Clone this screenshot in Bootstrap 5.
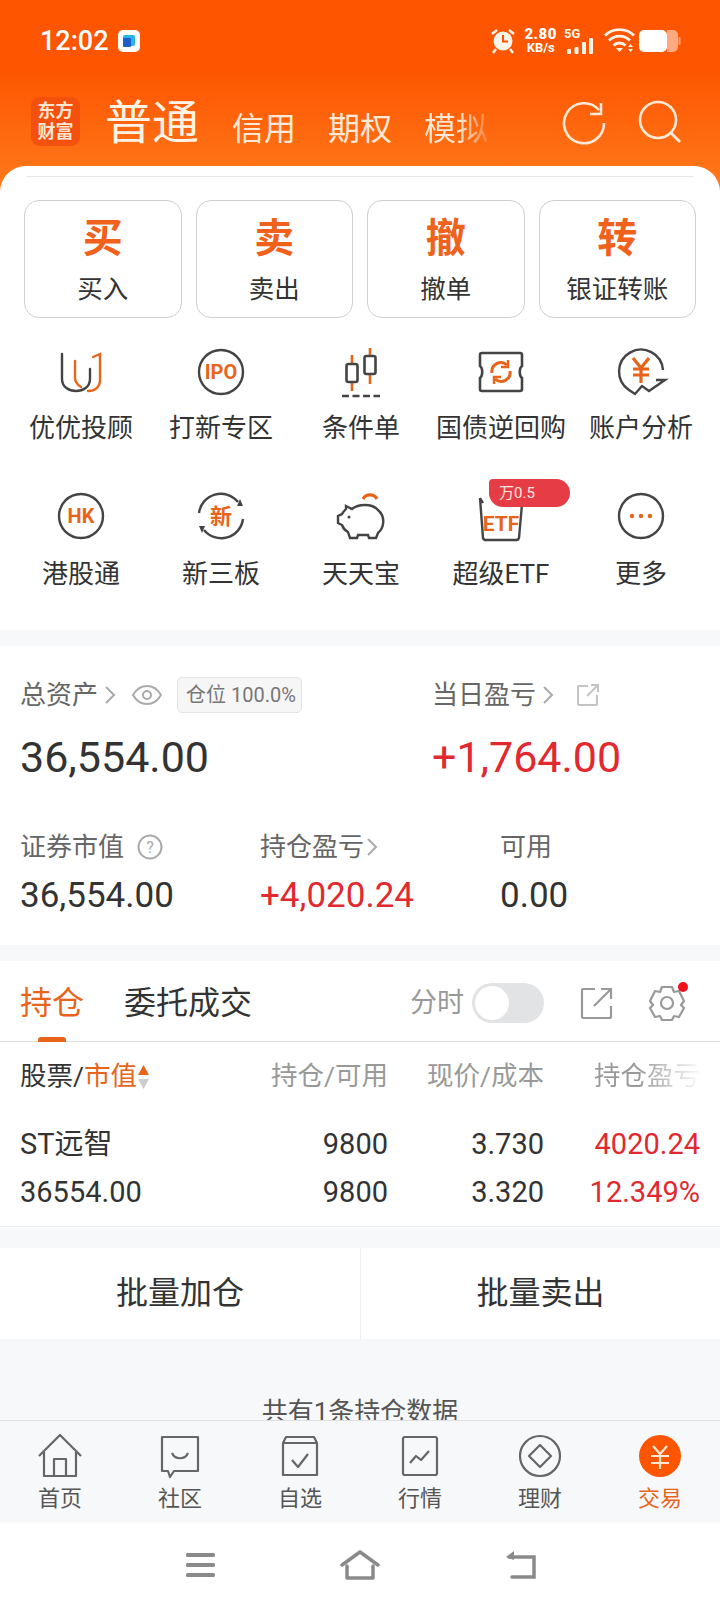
<!DOCTYPE html>
<html lang="zh-CN">
<head>
<meta charset="utf-8">
<title>交易</title>
<link href="https://cdn.jsdelivr.net/npm/bootstrap@5.3.0/dist/css/bootstrap.min.css" rel="stylesheet">
<style>
html,body{margin:0;padding:0}
body{width:720px;height:1608px;overflow:hidden;background:#fff;color:#333;font-family:Roboto,"Noto Sans CJK SC",sans-serif}
.shell{width:720px;height:1608px;display:flex;flex-direction:column;overflow:hidden}
.scroller{height:1420px;overflow:hidden;background:#f7f8fa;flex:none}
.hero{height:190px;background:linear-gradient(#fd5500 0,#fd5500 70px,#ff7a1c 190px);color:#fff}
.statusline{height:82px;padding:0 39px 0 40px;font-size:27px;font-weight:500;line-height:1}
.statuslogo{width:22px;height:22px;background:#fff;border-radius:5px;margin-left:9px}
.netrate{font-size:13px;font-weight:700;line-height:13px;text-align:center;margin:0 7px 0 8px}
.netrate b{display:block;font-size:15px;letter-spacing:.5px}
.toprow{height:82px;padding:0 36px 0 31px;color:#ffe9d6}
.brandmark{width:49px;height:49px;border-radius:9px;background:#f4500e;color:#ffe5d0;font-size:18px;font-weight:700;line-height:21px;text-align:center;padding-top:3px;margin:-4px 25px 0 0;flex:none}
.tabmain{font-size:47px;line-height:56px;margin-right:33px;color:#fff3e6}
.tabsub{font-size:32px;line-height:40px;margin-right:32px;padding-top:11px}
.tabfade{background:linear-gradient(90deg,#ffe9d6 55%,rgba(255,233,214,.2));-webkit-background-clip:text;background-clip:text;color:transparent;margin-right:0}
.sheet{background:#fff;border-radius:26px 26px 0 0;margin-top:-24px;position:relative;padding-top:10px}
.sheetrule{height:1px;background:#e6e6e6;margin:0 26px 23px}
.quickrow{display:grid;grid-template-columns:repeat(4,1fr);gap:14px;padding:0 24px 0 24px}
.quickbtn{height:118px;border:1px solid #cfcfcf;border-radius:15px;text-align:center;padding-top:12px}
.quickbig{display:block;font-size:40px;line-height:52px;font-weight:700;color:#f0611c}
.quicklabel{display:block;font-size:25.5px;line-height:49px;color:#333}
.iconrow{display:grid;grid-template-columns:repeat(5,140px);padding:0 11px}
.iconrow.r1{padding-top:24px}
.iconrow.r2{padding-top:41px;padding-bottom:39px}
.iconcell{text-align:center;font-size:26px;line-height:34px;color:#333;position:relative;white-space:nowrap}
.iconcell svg{display:block;margin:0 auto 9px;width:60px;height:60px}
.iconrow.r2 .iconcell svg{margin-bottom:11px}
.ratechip{position:absolute;left:58px;top:-7px;width:81px;height:28px;background:#e63c46;border-radius:4px 14px 14px 14px;color:#ffe7e0;font-size:15px;line-height:28px;text-align:left;padding-left:10px}
.block{background:#fff;margin-top:16px}
.assets{padding:0 20px;height:299px}
.assetsrow1{display:flex;height:94px;padding-top:31px}
.leftpart{width:412px}
.labeltext{font-size:26px;line-height:36px;color:#666}
.chev{width:12px;height:20px;margin:0 0 0 6px}
.eyegap{margin-left:16px}
.posbadge{height:36px;border:1px solid #e4e4e4;background:#f6f6f7;border-radius:5px;font-size:20px;line-height:34px;color:#777;padding:0 5px 0 8px;margin-left:15px}
.bigvalue{font-size:43px;line-height:56px;font-weight:400;color:#333}
.subrow{display:grid;grid-template-columns:240px 240px 1fr;padding-top:89px}
.subval{font-size:35px;line-height:50px;color:#333;margin-top:6px}
.tabsblock{height:267px;position:relative}
.tabbarx{height:81px;padding:4px 34px 0 20px;border-bottom:1px solid #dedede;position:relative}
.tabactive{font-size:32px;line-height:44px;color:#e8641b}
.tabother{font-size:32px;line-height:44px;color:#333;margin-left:40px}
.tabind{position:absolute;left:38px;bottom:-1px;width:28px;height:5px;border-radius:3px 3px 0 0;background:#e8641b}
.fenshi{font-size:27px;color:#999;margin-right:8px}
.switchx{width:72px;height:40px;border-radius:20px;background:#e2e3e5;padding:3px;margin-right:36px}
.switchx i{display:block;width:34px;height:34px;border-radius:50%;background:#fff}
.extgap{margin-right:34px}
.gridrow{display:grid;grid-template-columns:210px 158px 156px 1fr;padding:0 20px;text-align:right}
.gridrow>div:first-child{text-align:left}
.headrow{font-size:26.5px;line-height:36px;color:#999;padding-top:16px;height:78px}
.headrow .cn{color:#333}
.orange{color:#e8641b}
.fadeend{background:linear-gradient(90deg,#999 60%,rgba(153,153,153,.05));-webkit-background-clip:text;background-clip:text;color:transparent;white-space:nowrap}
.datarow{font-size:29px;line-height:48px;color:#333}
.posrule{height:1px;background:#e9e9ec;margin-top:10px}
.batch{height:91px;margin-top:20px;display:grid;grid-template-columns:1fr 1fr;background:#fff}
.batch div{font-size:32px;line-height:91px;text-align:center;color:#333}
.batch div+div{position:relative;border-left:1px solid #f0f0f0}
.totalline{font-size:26px;line-height:34px;text-align:center;color:#555;padding-top:56px}
.red{color:#e1292f}
.bottomnav{height:103px;background:#f7f8fa;border-top:1px solid #e0e0e4;display:grid;grid-template-columns:repeat(6,120px);flex:none}
.navitem{text-align:center;font-size:22px;line-height:28px;color:#555;padding-top:11px}
.navitem svg{display:block;width:48px;height:48px;margin:0 auto 5px}
.navitem.on{color:#e8641b}
.softkeys{height:85px;background:#fff;display:flex;justify-content:center;gap:124px;padding-top:27px;flex:none}
</style>
</head>
<body>
<div class="shell">
  <div class="scroller">
    <div class="hero">
      <div class="statusline d-flex align-items-center">
        <span>12:02</span>
        <span class="statuslogo d-flex align-items-center justify-content-center">
          <svg width="18" height="18" viewBox="0 0 18 18"><rect x="3" y="3" width="12" height="11" rx="2" fill="#27b4e6"/><rect x="3" y="6" width="8" height="9" rx="1" fill="#1c5fc9"/></svg>
        </span>
        <span class="ms-auto d-flex align-items-center">
          <svg width="26" height="28" viewBox="0 0 26 28"><circle cx="13" cy="14" r="9.5" fill="#fff4e8"/><path d="M13 8v6.5h5" fill="none" stroke="#fd5500" stroke-width="2"/><path d="M2 7l5-4M24 7l-5-4M6 22l-3 4M20 22l3 4" stroke="#fff4e8" stroke-width="2.4" fill="none"/></svg>
          <span class="netrate"><b>2.80</b>KB/s</span>
          <svg width="32" height="28" viewBox="0 0 32 28"><text x="0" y="11" font-size="13" font-weight="700" fill="#fff4e8" font-family="Roboto">5G</text><rect x="3" y="22" width="4" height="5" rx="1" fill="#fff4e8"/><rect x="10.500" y="20" width="4" height="7" rx="1" fill="#fff4e8"/><rect x="18" y="15" width="4" height="12" rx="1" fill="#fff4e8"/><rect x="25" y="11" width="4" height="16" rx="1" fill="#fff4e8"/></svg>
          <svg class="ms-2" width="31" height="28" viewBox="0 0 31 28"><path d="M1 8.500a21 21 0 0 1 29 0M5 13.500a15 15 0 0 1 21 0M9.500 18.500a8.500 8.500 0 0 1 12 0" fill="none" stroke="#fff4e8" stroke-width="2.800"/><path d="M12 21h7l-3.500 4zM24 20l2.500-3 2.500 3zM24 22h5l-2.500 3z" fill="#fff4e8"/></svg>
          <svg class="ms-1" width="42" height="24" viewBox="0 0 42 24"><rect x="0" y="1" width="28" height="22" rx="5" fill="#fff"/><path d="M28 1h6a5 5 0 0 1 5 5v12a5 5 0 0 1-5 5h-6z" fill="#ffa981"/><rect x="39.500" y="8" width="2" height="8" rx="1" fill="#ffa981"/></svg>
        </span>
      </div>
      <div class="toprow d-flex align-items-center">
        <div class="brandmark">东方<br>财富</div>
        <div class="tabmain">普通</div>
        <div class="tabsub">信用</div>
        <div class="tabsub">期权</div>
        <div class="tabsub tabfade">模拟</div>
        <svg class="ms-auto" width="46" height="46" viewBox="0 0 46 46"><path d="M38 10A20 20 0 1 0 43 23" fill="none" stroke="#ffe9d6" stroke-width="2.600"/><path d="M40 3v11H29" fill="none" stroke="#ffe9d6" stroke-width="2.600"/></svg>
        <svg style="margin-left:29px" width="48" height="48" viewBox="0 0 48 48"><circle cx="22" cy="21" r="18" fill="none" stroke="#ffe9d6" stroke-width="2.600"/><path d="M35 34l9 9" stroke="#ffe9d6" stroke-width="2.800" fill="none"/></svg>
      </div>
    </div>
    <div class="sheet">
      <div class="sheetrule"></div>
      <div class="quickrow">
        <div class="quickbtn"><span class="quickbig">买</span><span class="quicklabel">买入</span></div>
        <div class="quickbtn"><span class="quickbig">卖</span><span class="quicklabel">卖出</span></div>
        <div class="quickbtn"><span class="quickbig">撤</span><span class="quicklabel">撤单</span></div>
        <div class="quickbtn"><span class="quickbig">转</span><span class="quicklabel">银证转账</span></div>
      </div>
      <div class="iconrow r1">
        <div class="iconcell">
          <svg viewBox="0 0 60 60" fill="none" stroke-width="2.400" stroke-linecap="round"><path d="M11 12V37c0 16 28 16 28 0V27" stroke="#444"/><path d="M24 19V36c0 4 3 7 6 9" stroke="#e8641b"/><path d="M42 15l7-3V38c0 7-5 11-12 11" stroke="#e8641b"/></svg>优优投顾
        </div>
        <div class="iconcell">
          <svg viewBox="0 0 60 60" fill="none"><circle cx="30" cy="30" r="22" stroke="#444" stroke-width="2.400"/><text x="30" y="37" text-anchor="middle" font-family="Roboto" font-weight="700" font-size="20" fill="#e8641b" stroke="none">IPO</text></svg>打新专区
        </div>
        <div class="iconcell">
          <svg viewBox="0 0 60 60" fill="none" stroke-width="2.600"><path d="M21 13v36M39 6v36" stroke="#e8641b"/><rect x="15.500" y="22" width="11" height="18" rx="2" fill="#fff" stroke="#444"/><rect x="33.500" y="14" width="11" height="18" rx="2" fill="#fff" stroke="#444"/><path d="M11 54h38" stroke="#444" stroke-dasharray="7 3.500"/></svg>条件单
        </div>
        <div class="iconcell">
          <svg viewBox="0 0 60 60" fill="none" stroke-width="2.600"><path d="M11 11h38a2 2 0 0 1 2 2v11c-3 2-3 10 0 12v11a2 2 0 0 1-2 2H11a2 2 0 0 1-2-2V36c3-2 3-10 0-12V13a2 2 0 0 1 2-2z" stroke="#444"/><path d="M21 31a9 9 0 0 1 15-8M39 29a9 9 0 0 1-15 8" stroke="#e8641b" stroke-width="3"/><path d="M37 18v7h-7M23 42v-7h7" stroke="#e8641b" stroke-width="2.400"/></svg>国债逆回购
        </div>
        <div class="iconcell">
          <svg viewBox="0 0 60 60" fill="none" stroke-width="2.400"><path d="M52 28A22 22 0 1 0 18 48l6 4 7-8 7 5 16-11-9 0" stroke="#444"/><path d="M22 16l8 10 8-10M30 26v15M22 27h16M22 33h16" stroke="#e8641b" stroke-width="3.200"/></svg>账户分析
        </div>
      </div>
      <div class="iconrow r2">
        <div class="iconcell">
          <svg viewBox="0 0 60 60" fill="none"><circle cx="30" cy="30" r="22" stroke="#444" stroke-width="2.400"/><text x="30" y="37" text-anchor="middle" font-family="Roboto" font-weight="700" font-size="20" fill="#e8641b">HK</text></svg>港股通
        </div>
        <div class="iconcell">
          <svg viewBox="0 0 60 60" fill="none"><path d="M8 27A22 22 0 0 1 47 16M52 33A22 22 0 0 1 13 44" stroke="#444" stroke-width="2.400"/><path d="M49 13l3 7-6 0zM11 47l-3-7 6 0z" fill="#444"/><text x="30" y="38" text-anchor="middle" font-family="Noto Sans CJK SC" font-weight="700" font-size="22" fill="#e8641b">新</text></svg>新三板
        </div>
        <div class="iconcell">
          <svg viewBox="0 0 60 60" fill="none" stroke-width="2.400"><path d="M32 13a8 8 0 0 1 14 0" stroke="#e8641b" stroke-width="3.200"/><path d="M15 20l6 3c6-5 20-6 26 1 8 7 6 18 0 23l-2 5h-7l-1-3H27l-1 3h-7l-2-6c-4-2-5-4-6-7l-4-2v-7l4-2c1-2 2-3 4-5z" stroke="#444"/><circle cx="18" cy="31" r="1.500" fill="#444"/></svg>天天宝
        </div>
        <div class="iconcell">
          <svg viewBox="0 0 60 60" fill="none"><path d="M9 12l3 5M51 18l-3 34a3 3 0 0 1-3 2H15a3 3 0 0 1-3-2L9 12" stroke="#444" stroke-width="2.400"/><text x="30" y="45" text-anchor="middle" font-family="Roboto" font-weight="700" font-size="21" fill="#e8641b">ETF</text></svg>超级ETF
          <span class="ratechip">万0.5</span>
        </div>
        <div class="iconcell">
          <svg viewBox="0 0 60 60" fill="none"><circle cx="30" cy="30" r="22" stroke="#444" stroke-width="2.400"/><circle cx="21" cy="30" r="2.200" fill="#e8641b"/><circle cx="30" cy="30" r="2.200" fill="#e8641b"/><circle cx="39" cy="30" r="2.200" fill="#e8641b"/></svg>更多
        </div>
      </div>
    </div>
    <div class="block assets">
      <div class="assetsrow1">
        <div class="leftpart">
          <div class="d-flex align-items-center">
            <span class="labeltext">总资产</span>
            <svg class="chev" viewBox="0 0 12 20" fill="none" stroke="#aaa" stroke-width="2"><path d="M2 2l8 8-8 8"/></svg>
            <svg class="eyegap" width="30" height="22" viewBox="0 0 30 22" fill="none" stroke="#aaa" stroke-width="2"><path d="M1 11c7-12 21-12 28 0-7 12-21 12-28 0z"/><circle cx="15" cy="11" r="4"/></svg>
            <span class="posbadge">仓位 100.0%</span>
          </div>
          <div class="bigvalue mt-3">36,554.00</div>
        </div>
        <div>
          <div class="d-flex align-items-center">
            <span class="labeltext">当日盈亏</span>
            <svg class="chev" viewBox="0 0 12 20" fill="none" stroke="#aaa" stroke-width="2"><path d="M2 2l8 8-8 8"/></svg>
            <svg style="margin-left:22px" width="24" height="24" viewBox="0 0 24 24" fill="none" stroke="#c4c4c4" stroke-width="2"><path d="M12 3H3a1 1 0 0 0-1 1v17a1 1 0 0 0 1 1h17a1 1 0 0 0 1-1v-9M11 13L22 2M15 2h7v7"/></svg>
          </div>
          <div class="bigvalue red mt-3">+1,764.00</div>
        </div>
      </div>
      <div class="subrow">
        <div>
          <div class="d-flex align-items-center"><span class="labeltext">证券市值</span>
            <svg style="margin-left:13px" width="26" height="26" viewBox="0 0 26 26" fill="none"><circle cx="13" cy="13" r="11.500" stroke="#aaa" stroke-width="2"/><text x="13" y="19" text-anchor="middle" font-size="16" fill="#aaa" font-family="Roboto">?</text></svg>
          </div>
          <div class="subval">36,554.00</div>
        </div>
        <div>
          <div class="d-flex align-items-center"><span class="labeltext">持仓盈亏</span>
            <svg class="chev" style="margin-left:2px" viewBox="0 0 12 20" fill="none" stroke="#aaa" stroke-width="2"><path d="M2 2l8 8-8 8"/></svg>
          </div>
          <div class="subval red">+4,020.24</div>
        </div>
        <div>
          <div class="labeltext">可用</div>
          <div class="subval">0.00</div>
        </div>
      </div>
    </div>
    <div class="block tabsblock">
      <div class="tabbarx d-flex align-items-center">
        <span class="tabactive">持仓</span><span class="tabother">委托成交</span>
        <span class="tabind"></span>
        <span class="fenshi ms-auto">分时</span>
        <span class="switchx"><i></i></span>
        <svg class="extgap" width="34" height="34" viewBox="0 0 34 34" fill="none" stroke="#999" stroke-width="2.200"><path d="M15 3H3a1 1 0 0 0-1 1v27a1 1 0 0 0 1 1h27a1 1 0 0 0 1-1V20M14 20L31 3M21 3h10v10"/></svg>
        <span class="position-relative d-inline-flex">
          <svg width="38" height="38" viewBox="0 0 38 38" fill="none" stroke="#999" stroke-width="2.200"><path d="M14 3h10l2 5 5-1 5 10-3 4 3 3-5 9-5-1-2 4H14l-2-4-5 1-5-9 3-3-3-4 5-10 5 1z" stroke-linejoin="round"/><circle cx="19" cy="19" r="6"/></svg>
          <span class="position-absolute rounded-circle" style="background:#f0101c;width:10px;height:10px;right:-2px;top:-2px"></span>
        </span>
      </div>
      <div class="gridrow headrow">
        <div><span class="cn">股票/</span><span class="orange">市值</span><svg width="13" height="26" viewBox="0 0 13 26" style="vertical-align:-5px"><path d="M6.500 1l5.500 10H1z" fill="#e8641b"/><path d="M6.500 25L1 15h11z" fill="#ccc"/></svg></div>
        <div>持仓/可用</div>
        <div>现价/成本</div>
        <div class="fadeend">持仓盈亏</div>
      </div>
      <div class="gridrow datarow">
        <div>ST远智</div><div>9800</div><div>3.730</div><div class="red">4020.24</div>
      </div>
      <div class="gridrow datarow">
        <div>36554.00</div><div>9800</div><div>3.320</div><div class="red">12.349%</div>
      </div>
      <div class="posrule"></div>
    </div>
    <div class="batch"><div>批量加仓</div><div>批量卖出</div></div>
    <div class="totalline">共有1条持仓数据</div>
  </div>
  <div class="bottomnav">
    <div class="navitem"><svg viewBox="0 0 48 48" fill="none" stroke="#666" stroke-width="2.200" stroke-linejoin="round"><path d="M3 24L24 3l21 21"/><path d="M8 20v24h32V20M18 44V27h12v17"/></svg>首页</div>
    <div class="navitem"><svg viewBox="0 0 48 48" fill="none" stroke="#666" stroke-width="2.200" stroke-linejoin="round"><path d="M6 5h36v34H18l-4 6-2-6H6z"/><path d="M16 21c3 7 13 7 16 0"/></svg>社区</div>
    <div class="navitem"><svg viewBox="0 0 48 48" fill="none" stroke="#666" stroke-width="2.200" stroke-linejoin="round"><path d="M7 11l3-6h28l3 6v32H7zM7 11h34"/><path d="M16 28l6 7 10-13"/></svg>自选</div>
    <div class="navitem"><svg viewBox="0 0 48 48" fill="none" stroke="#666" stroke-width="2.200" stroke-linejoin="round"><rect x="7" y="5" width="34" height="38" rx="2"/><path d="M14 31l6-7 5 4 8-9"/></svg>行情</div>
    <div class="navitem"><svg viewBox="0 0 48 48" fill="none" stroke="#666" stroke-width="2.200" stroke-linejoin="round"><circle cx="24" cy="24" r="20"/><path d="M24 13l11 11-11 11-11-11z"/></svg>理财</div>
    <div class="navitem on"><svg viewBox="0 0 48 48" fill="none"><circle cx="24" cy="24" r="21" fill="#fd5500"/><path d="M17 14l7 8 7-8M15 24h18M15 31h18M24 22v15" stroke="#ffe9d6" stroke-width="2.200"/></svg>交易</div>
  </div>
  <div class="softkeys">
    <svg width="32" height="30" viewBox="0 0 32 30" fill="#8a8a8a"><rect x="2" y="3" width="29" height="4" rx="1.500"/><rect x="2" y="13" width="29" height="4" rx="1.500"/><rect x="2" y="23" width="29" height="4" rx="1.500"/></svg>
    <svg width="40" height="30" viewBox="0 0 40 30" fill="none" stroke="#8a8a8a" stroke-width="3.500" stroke-linejoin="round" stroke-linecap="round"><path d="M2 15L20 2l18 13"/><path d="M7 16v12h26V16"/></svg>
    <svg width="32" height="30" viewBox="0 0 32 30" fill="none" stroke="#8a8a8a" stroke-width="3.500"><path d="M5 7h25v20H8" stroke-linecap="round"/><path d="M10 1L2 7l8 3z" fill="#8a8a8a" stroke="none"/></svg>
  </div>
</div>
<script src="https://cdn.jsdelivr.net/npm/bootstrap@5.3.0/dist/js/bootstrap.bundle.min.js"></script>
</body>
</html>
